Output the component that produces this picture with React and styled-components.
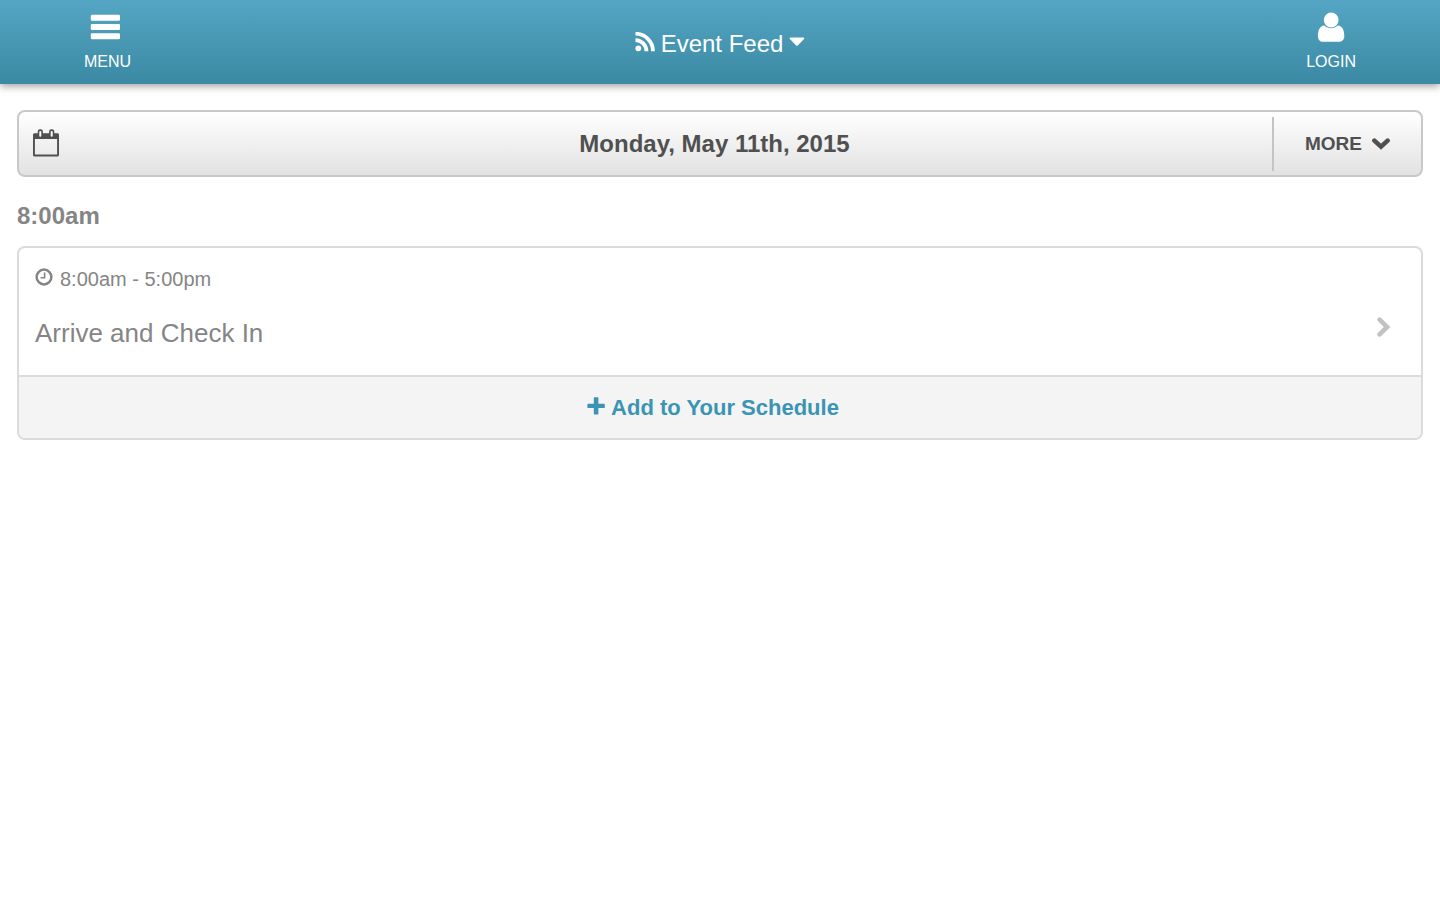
import React from 'react';
import styled, { createGlobalStyle } from 'styled-components';

const App = () => {
  return (
    <>
      <GlobalStyle />
      <Header>
        <NavButton type="button">
          <BarsIcon />
          <span>MENU</span>
        </NavButton>
        <FeedButton type="button">
          <RssIcon />
          <span>Event Feed</span>
          <CaretIcon />
        </FeedButton>
        <NavButton type="button" $right>
          <UserIcon />
          <span>LOGIN</span>
        </NavButton>
      </Header>
      <Main>
        <DateBar>
          <DateButton type="button">
            <CalendarIcon />
            <span>Monday, May 11th, 2015</span>
          </DateButton>
          <MoreButton type="button">
            MORE
            <ChevronDownIcon />
          </MoreButton>
        </DateBar>
        <TimeHeading>8:00am</TimeHeading>
        <EventCard time="8:00am - 5:00pm" title="Arrive and Check In" />
      </Main>
    </>
  );
};

const EventCard = ({ time, title }) => {
  return (
    <Card>
      <CardLink href="#event">
        <EventTime>
          <ClockIcon />
          {time}
        </EventTime>
        <EventRow>
          <EventTitle>{title}</EventTitle>
          <ChevronRightIcon />
        </EventRow>
      </CardLink>
      <AddButton type="button">
        <PlusIcon />
        Add to Your Schedule
      </AddButton>
    </Card>
  );
};

const BarsIcon = () => (
  <svg width="30" height="26" viewBox="0 0 30 26" fill="currentColor" aria-hidden="true">
    <rect x="0.8" y="0.8" width="29.2" height="6" rx="1.2" />
    <rect x="0.8" y="10" width="29.2" height="6" rx="1.2" />
    <rect x="0.8" y="19.3" width="29.2" height="6" rx="1.2" />
  </svg>
);

const UserIcon = () => (
  <svg width="28" height="31" viewBox="0 0 28 31" fill="currentColor" aria-hidden="true">
    <circle cx="14.2" cy="8" r="7.4" />
    <path d="M7.2 13.6C2.4 14 0.9 19.3 0.9 24.2C0.9 27.6 3 29.8 6 29.8H21.8C25 29.8 27.3 27.7 27.3 24.2C27.3 19.3 25.9 14 20.9 13.6C19 15.3 16.7 16.2 14.2 16.2C11.6 16.2 9.2 15.4 7.2 13.6Z" />
  </svg>
);

const RssIcon = () => (
  <svg width="20" height="20" viewBox="0 0 20 20" fill="none" stroke="currentColor" aria-hidden="true">
    <circle cx="3.3" cy="16.300" r="2.900" fill="currentColor" stroke="none" />
    <path d="M0.500 8.200A11 11 0 0 1 11.400 19.200" strokeWidth="3.800" />
    <path d="M0.500 1.700A17.500 17.500 0 0 1 18 19.200" strokeWidth="3.800" />
  </svg>
);

const CaretIcon = () => (
  <svg width="16" height="10" viewBox="0 0 16 10" fill="currentColor" aria-hidden="true">
    <path d="M1.5 0.6H14.4C15.4 0.6 15.6 1.5 15 2.1L9 8.3C8.3 9 7.6 9 6.9 8.3L0.9 2.1C0.3 1.5 0.5 0.6 1.5 0.6Z" />
  </svg>
);

const CalendarIcon = () => (
  <svg width="26" height="28" viewBox="0 0 26 28" aria-hidden="true">
    <path
      d="M1.5 4.200H24.5C25.300 4.200 26 4.900 26 5.700V26C26 26.800 25.300 27.500 24.500 27.500H1.500C0.700 27.500 0 26.800 0 26V5.700C0 4.900 0.700 4.200 1.500 4.200ZM1.900 10V25.600H24.100V10Z"
      fill="currentColor"
      fillRule="evenodd"
    />
    <rect x="4.700" y="0.300" width="5.200" height="8.800" rx="2.300" fill="currentColor" />
    <rect x="16.100" y="0.300" width="5.200" height="8.800" rx="2.300" fill="currentColor" />
    <rect x="6.300" y="1.900" width="2" height="5.800" rx="0.900" fill="#fafafa" />
    <rect x="17.700" y="1.900" width="2" height="5.800" rx="0.900" fill="#fafafa" />
  </svg>
);

const ChevronDownIcon = () => (
  <svg width="18" height="12" viewBox="0 0 18 12" fill="none" aria-hidden="true">
    <path d="M2.4 2.6L9 8.700L15.600 2.600" stroke="currentColor" strokeWidth="4.500" strokeLinecap="round" />
  </svg>
);

const ChevronRightIcon = () => (
  <svg width="14" height="20" viewBox="0 0 14 20" fill="none" aria-hidden="true">
    <path d="M2.600 2.700L10.100 10L2.600 17.300" stroke="#c2c2c2" strokeWidth="4.600" strokeLinecap="round" />
  </svg>
);

const ClockIcon = () => (
  <svg width="18" height="18" viewBox="0 0 18 18" fill="none" stroke="currentColor" aria-hidden="true">
    <circle cx="9" cy="9" r="7.4" strokeWidth="2.500" />
    <path d="M9.600 4.500V9.700H5.600" strokeWidth="1.600" />
  </svg>
);

const PlusIcon = () => (
  <svg width="18" height="18" viewBox="0 0 18 18" fill="currentColor" aria-hidden="true">
    <path d="M7.5 0.3H10.7Q11.4 0.3 11.4 1V6.7H17.1Q17.8 6.7 17.8 7.4V10.4Q17.8 11.1 17.1 11.1H11.4V16.8Q11.4 17.5 10.7 17.5H7.5Q6.8 17.5 6.8 16.8V11.1H1.1Q0.4 11.1 0.4 10.4V7.4Q0.4 6.7 1.1 6.7H6.8V1Q6.8 0.3 7.5 0.3Z" />
  </svg>
);

const GlobalStyle = createGlobalStyle`
  * {
    box-sizing: border-box;
  }

  body {
    margin: 0;
    background-color: #ffffff;
    color: #858585;
    font-family: "Liberation Sans", Arial, sans-serif;
  }

  button {
    padding: 0;
    border: none;
    background: none;
    color: inherit;
    font-family: inherit;
    cursor: pointer;
  }

  svg {
    display: block;
    flex-shrink: 0;
  }
`;

const Header = styled.header`
  display: grid;
  grid-template-columns: 1fr auto 1fr;
  height: 84px;
  padding: 0 84px;
  background: linear-gradient(#54a6c4, #3b89a3);
  box-shadow: 0 2px 8px rgba(0, 0, 0, 0.4);
  color: #ffffff;
`;

const NavButton = styled.button`
  display: flex;
  flex-direction: column;
  justify-content: space-between;
  align-items: ${(props) => (props.$right ? 'center' : 'flex-start')};
  justify-self: ${(props) => (props.$right ? 'end' : 'start')};
  height: 72px;
  padding-top: ${(props) => (props.$right ? '12px' : '14px')};
  font-size: 16px;
  line-height: 20px;

  svg {
    margin-left: ${(props) => (props.$right ? '0' : '6px')};
  }
`;

const FeedButton = styled.button`
  display: flex;
  align-items: center;
  gap: 6px;
  padding-top: 4px;
  font-size: 24px;
  line-height: 28px;

  svg {
    margin-bottom: 4px;
  }
`;

const Main = styled.main`
  padding: 26px 17px;
`;

const DateBar = styled.div`
  display: flex;
  align-items: center;
  height: 67px;
  border: 2px solid #c8c8c8;
  border-radius: 8px;
  background: linear-gradient(#ffffff, #e2e2e2);
  color: #505050;
`;

const DateButton = styled.button`
  display: flex;
  flex: 1;
  align-items: center;
  height: 54px;
  padding-left: 14px;
  font-size: 24px;
  font-weight: bold;

  svg {
    margin-bottom: 2px;
  }

  span {
    flex: 1;
    padding-left: 98px;
  }
`;

const MoreButton = styled.button`
  display: flex;
  align-items: center;
  justify-content: center;
  gap: 10px;
  width: 149px;
  height: 54px;
  border-left: 2px solid #c4c4c4;
  font-size: 19px;
  font-weight: bold;
`;

const TimeHeading = styled.h2`
  margin: 24px 0 15px;
  font-size: 24px;
  line-height: 30px;
`;

const Card = styled.article`
  overflow: hidden;
  border: 2px solid #dbdbdb;
  border-radius: 8px;
`;

const CardLink = styled.a`
  display: block;
  padding: 19px 30px 26px 16px;
  color: inherit;
  text-decoration: none;
`;

const EventTime = styled.div`
  display: flex;
  align-items: center;
  gap: 7px;
  font-size: 20px;
  line-height: 24px;

  svg {
    margin-bottom: 4px;
  }
`;

const EventRow = styled.div`
  display: flex;
  align-items: center;
  justify-content: space-between;
  margin-top: 26px;

  svg {
    margin-bottom: 12px;
  }
`;

const EventTitle = styled.h3`
  margin: 0;
  font-size: 26px;
  font-weight: normal;
  line-height: 32px;
`;

const AddButton = styled.button`
  display: flex;
  align-items: center;
  justify-content: center;
  gap: 6px;
  width: 100%;
  height: 63px;
  padding-right: 14px;
  border-top: 2px solid #dbdbdb;
  background-color: #f4f4f4;
  color: #3b94b3;
  font-size: 22px;
  font-weight: bold;

  svg {
    margin-bottom: 4px;
  }
`;

export default App;
